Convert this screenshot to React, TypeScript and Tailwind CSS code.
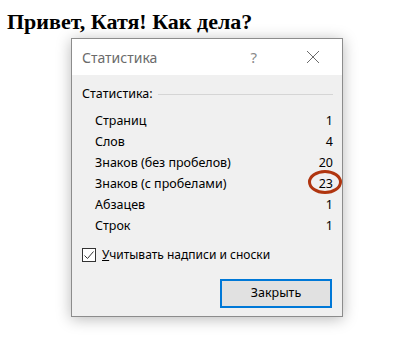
import React from "react";

const rows: [string, string][] = [
  ["Страниц", "1"],
  ["Слов", "4"],
  ["Знаков (без пробелов)", "20"],
  ["Знаков (с пробелами)", "23"],
  ["Абзацев", "1"],
  ["Строк", "1"],
];

const App: React.FC = () => {
  return (
    <div className="w-[397px] h-[345px] bg-white">
      <h1 className="pl-[7px] pt-[10px] text-[22px] leading-[24px] font-bold text-black font-['Liberation_Serif',serif]">
        Привет, Катя! Как дела?
      </h1>

      <div className="ml-[71px] mt-[4px] w-[272px] h-[279px] border border-[#8c8c8c] bg-[#f0f0f0] shadow-[0_2px_14px_rgba(0,0,0,0.28)] flex flex-col font-['Noto_Sans',sans-serif] text-[12.5px] text-black">
        {/* title bar */}
        <div className="h-[36px] bg-white flex items-center pl-[10px] pr-[22px]">
          <span className="text-[14px] text-[#6b6b6b] flex-1">Статистика</span>
          <span className="text-[15px] text-[#8a8a8a] mr-[49px]">?</span>
          <svg width="14" height="14" viewBox="0 0 14 14">
            <path d="M1 1 L13 13 M13 1 L1 13" stroke="#6b6b6b" strokeWidth="1" fill="none" />
          </svg>
        </div>

        <div className="flex-1 flex flex-col pl-[10px] pr-[9px]">
          <div className="mt-[9px] h-[21px] flex items-center gap-[5px]">
            <span>Статистика:</span>
            <div className="flex-1 h-px bg-[#d5d5d5]" />
          </div>

          <div className="mt-[6px] pl-[13px] flex flex-col">
            {rows.map(([label, value]) => (
              <div key={label} className="h-[21px] flex items-center justify-between">
                <span>{label}</span>
                {value === "23" ? (
                  <span className="relative">
                    {value}
                    <span className="absolute left-[-11px] top-[-5px] w-[34px] h-[24px] rounded-[50%] border-[3px] border-[#b0350f]" />
                  </span>
                ) : (
                  <span>{value}</span>
                )}
              </div>
            ))}
          </div>

          <div className="mt-[10px] h-[16px] flex items-center">
            <div className="w-[14px] h-[14px] border border-[#333] bg-white flex items-center justify-center">
              <svg width="12" height="12" viewBox="0 0 12 12">
                <path d="M1.5 6.5 L4.5 9.5 L10.5 2.5" stroke="#333" strokeWidth="1" fill="none" />
              </svg>
            </div>
            <span className="ml-[6px] text-[12px]">
              <span className="underline">У</span>читывать надписи и сноски
            </span>
          </div>

          <div className="mt-[16px] flex justify-end">
            <button className="w-[112px] h-[29px] border-2 border-[#0078d7] bg-[#e1e1e1] text-[12.5px] text-black mr-px">
              Закрыть
            </button>
          </div>
        </div>
      </div>
    </div>
  );
};

export default App;
